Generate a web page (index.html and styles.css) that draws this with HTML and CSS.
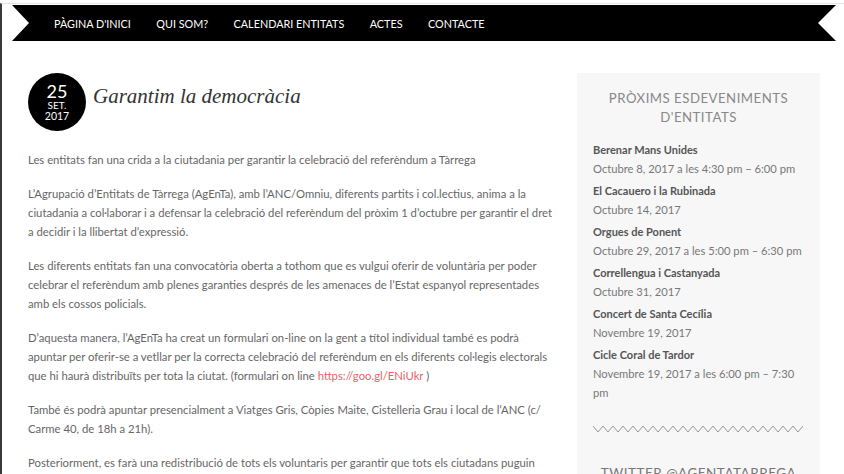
FILE: index.html
```html
<!DOCTYPE html>
<html lang="ca">
<head>
<meta charset="utf-8">
<title>Garantim la democràcia</title>
<link rel="stylesheet" href="styles.css">
</head>
<body>
<div class="page">
  <header class="topbar">
    <nav class="ribbon">
      <a href="#">PÀGINA D'INICI</a>
      <a href="#">QUI SOM?</a>
      <a href="#">CALENDARI ENTITATS</a>
      <a href="#">ACTES</a>
      <a href="#">CONTACTE</a>
    </nav>
  </header>
  <div class="layout">
    <article class="post">
      <div class="post-head">
        <div class="date-badge">
          <span class="day">25</span>
          <span class="month">SET.</span>
          <span class="year">2017</span>
        </div>
        <h1 class="post-title">Garantim la democràcia</h1>
      </div>
      <div class="post-body">
        <p>Les entitats fan una crida a la ciutadania per garantir la celebració del referèndum a Tàrrega</p>
        <p>L’Agrupació d’Entitats de Tàrrega (AgEnTa), amb l’ANC/Omniu, diferents partits i col.lectius, anima a la ciutadania a col·laborar i a defensar la celebració del referèndum del pròxim 1 d’octubre per garantir el dret a decidir i la llibertat d’expressió.</p>
        <p>Les diferents entitats fan una convocatòria oberta a tothom que es vulgui oferir de voluntària per poder celebrar el referèndum amb plenes garanties després de les amenaces de l’Estat espanyol representades amb els cossos policials.</p>
        <p>D’aquesta manera, l’AgEnTa ha creat un formulari on-line on la gent a títol individual també es podrà apuntar per oferir-se a vetllar per la correcta celebració del referèndum en els diferents col·legis electorals que hi haurà distribuïts per tota la ciutat. (formulari on line <a href="#">https://goo.gl/ENiUkr</a> )</p>
        <p>També és podrà apuntar presencialment a Viatges Gris, Còpies Maite, Cistelleria Grau i local de l’ANC (c/ Carme 40, de 18h a 21h).</p>
        <p>Posteriorment, es farà una redistribució de tots els voluntaris per garantir que tots els ciutadans puguin exercir el seu dret a vot.</p>
      </div>
    </article>
    <aside class="sidebar">
      <section class="widget">
        <h2 class="widget-title">PRÒXIMS ESDEVENIMENTS D'ENTITATS</h2>
        <ul class="events">
          <li><span class="ev-title">Berenar Mans Unides</span><span class="ev-date">Octubre 8, 2017 a les 4:30 pm – 6:00 pm</span></li>
          <li><span class="ev-title">El Cacauero i la Rubinada</span><span class="ev-date">Octubre 14, 2017</span></li>
          <li><span class="ev-title">Orgues de Ponent</span><span class="ev-date">Octubre 29, 2017 a les 5:00 pm – 6:30 pm</span></li>
          <li><span class="ev-title">Correllengua i Castanyada</span><span class="ev-date">Octubre 31, 2017</span></li>
          <li><span class="ev-title">Concert de Santa Cecília</span><span class="ev-date">Novembre 19, 2017</span></li>
          <li><span class="ev-title">Cicle Coral de Tardor</span><span class="ev-date ev-wrap">Novembre 19, 2017 a les 6:00 pm – 7:30 pm</span></li>
        </ul>
        <svg class="zigzag" width="210" height="8" viewBox="0 0 210 8" preserveAspectRatio="none">
          <polyline fill="none" stroke="#9a9a9a" stroke-width="1" points="0,1 5,7 10,1 15,7 20,1 25,7 30,1 35,7 40,1 45,7 50,1 55,7 60,1 65,7 70,1 75,7 80,1 85,7 90,1 95,7 100,1 105,7 110,1 115,7 120,1 125,7 130,1 135,7 140,1 145,7 150,1 155,7 160,1 165,7 170,1 175,7 180,1 185,7 190,1 195,7 200,1 205,7 210,1"/>
        </svg>
      </section>
      <section class="widget">
        <h2 class="widget-title twitter">TWITTER @AGENTATARREGA</h2>
      </section>
    </aside>
  </div>
</div>
</body>
</html>
```

FILE: styles.css
```css
* { box-sizing: border-box; }
html, body { margin: 0; padding: 0; background: #fff; }
body {
  font-family: Lato, "Open Sans", sans-serif;
  color: #666;
  height: 474px;
  overflow: hidden;
}
.page {
  border-left: 2px solid #3a3a3a;
  border-top: 1px solid #e4e4e4;
  min-height: 474px;
  margin-top: 3px;
}
.topbar {
  padding: 1px 8px 0 10px;
}
.ribbon {
  height: 36px;
  background: #000;
  display: flex;
  align-items: center;
  gap: 25.5px;
  padding-left: 42px;
  clip-path: polygon(0 0, 100% 0, calc(100% - 18px) 50%, 100% 100%, 0 100%, 17px 50%);
}
.ribbon a {
  color: #fff;
  text-decoration: none;
  font-size: 10.8px;
  padding-top: 1px;
}
.layout {
  display: flex;
  padding: 32px 22px 0 26px;
  gap: 29px;
}
.post {
  width: 526px;
  flex: none;
  margin-right: -6px;
}
.post-head {
  display: flex;
  align-items: flex-start;
  gap: 7px;
}
.date-badge {
  width: 58px;
  height: 58px;
  border-radius: 50%;
  background: #000;
  color: #fff;
  display: flex;
  flex-direction: column;
  align-items: center;
  justify-content: center;
  flex: none;
}
.date-badge .day { font-size: 18px; line-height: 17px; }
.date-badge .month { font-size: 10px; line-height: 11px; }
.date-badge .year { font-size: 10.5px; line-height: 11px; }
.post-title {
  margin: 11px 0 0;
  font-family: "Liberation Serif", "DejaVu Serif", serif;
  font-style: italic;
  font-weight: normal;
  font-size: 21px;
  color: #333;
}
.post-body {
  margin-top: 19px;
  font-size: 11.3px;
  line-height: 19px;
  color: #666;
}
.post-body p { margin: 0 0 15px; }
.post-body a { color: #e5636b; text-decoration: none; }
.sidebar {
  width: 243px;
  flex: none;
  background: #f7f7f7;
  padding: 16px 16px 0;
  min-height: 420px;
}
.widget-title {
  margin: 0;
  font-weight: normal;
  font-size: 13.2px;
  line-height: 19px;
  letter-spacing: 0.5px;
  text-align: center;
  color: #888;
}
.events {
  list-style: none;
  margin: 14px 0 0;
  padding: 0;
}
.events li {
  display: flex;
  flex-direction: column;
  margin-bottom: 4px;
}
.ev-title {
  font-size: 11px;
  font-weight: bold;
  color: #555;
  line-height: 18px;
}
.ev-date {
  font-size: 11.2px;
  color: #777;
  line-height: 19px;
}
.ev-wrap { padding-right: 8px; }
.zigzag {
  display: block;
  margin-top: 23px;
}
.widget + .widget { margin-top: 31px; }
.twitter { font-size: 13.5px; color: #777; }
```
